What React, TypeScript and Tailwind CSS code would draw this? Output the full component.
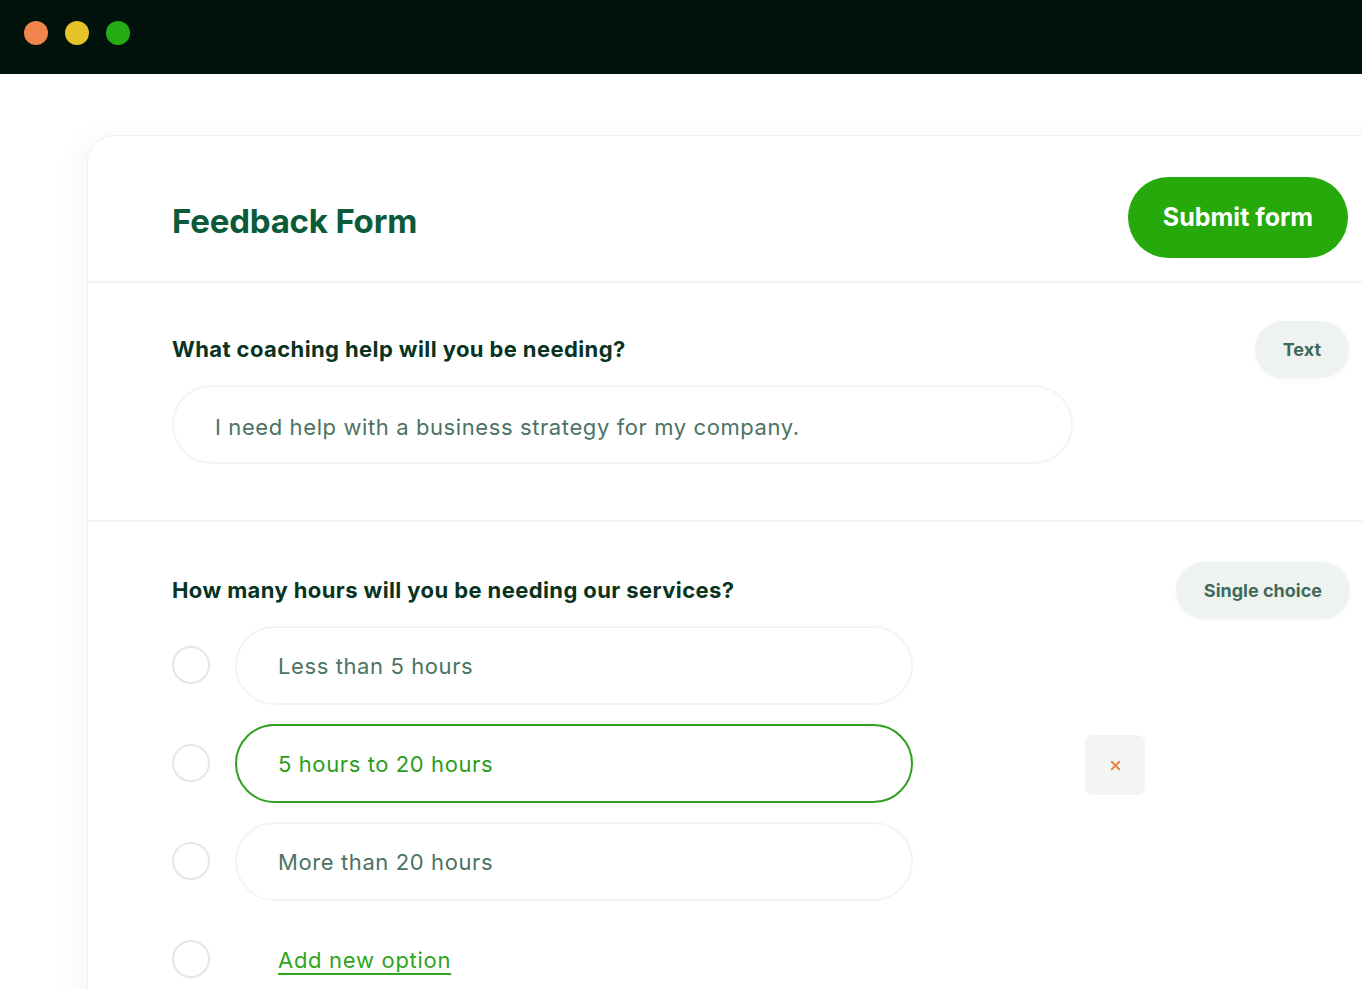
import { X } from "lucide-react";

const options = [
  { id: 1, label: "Less than 5 hours", selected: false },
  { id: 2, label: "5 hours to 20 hours", selected: true },
  { id: 3, label: "More than 20 hours", selected: false },
];

function Radio() {
  return <div className="w-[38px] h-[38px] shrink-0 rounded-full border-2 border-[#e4e7e5]" />;
}

function TypePill({ label }: { label: string }) {
  return (
    <div className="h-[57px] px-7 rounded-full bg-[#eff3f0] flex items-center text-[18px] font-bold text-[#3f6a5a] shadow-[0_2px_6px_rgba(0,0,0,0.03)]">
      {label}
    </div>
  );
}

export default function App() {
  return (
    <div className="w-[1362px] h-[989px] overflow-hidden bg-white font-['Inter',sans-serif]">
      {/* window bar */}
      <div className="h-[74px] bg-[#01120d] flex items-center gap-[17px] pl-6 pb-[8px]">
        <div className="w-6 h-6 rounded-full bg-[#ef844d]" />
        <div className="w-6 h-6 rounded-full bg-[#e6c328]" />
        <div className="w-6 h-6 rounded-full bg-[#23ad12]" />
      </div>

      <div className="pt-[61px] pl-[87px]">
        <div className="w-[1320px] h-[900px] rounded-tl-[28px] border border-[#eef0ef] bg-white shadow-[-12px_0_24px_rgba(0,0,0,0.03)]">
          {/* header */}
          <div className="h-[147px] flex items-center justify-between pl-[84px] pr-[58px] border-b-2 border-[#f2f3f2]">
            <h1 className="text-[33px] font-bold text-[#0b5a3a] tracking-[-0.2px] mt-[26px]">Feedback Form</h1>
            <button className="h-[81px] w-[220px] rounded-full bg-[#25a90b] text-white text-[25px] font-bold mt-[18px]">
              Submit form
            </button>
          </div>

          {/* question 1 */}
          <div className="pl-[84px] pr-[57px] pt-[38px] pb-[56px] border-b-2 border-[#f2f3f2]">
            <div className="flex items-center justify-between h-[57px]">
              <h2 className="text-[22px] font-bold text-[#08331f] tracking-[0.4px]">
                What coaching help will you be needing?
              </h2>
              <TypePill label="Text" />
            </div>
            <div className="mt-[7px] w-[901px] h-[79px] rounded-full border-2 border-[#f3f4f3] flex items-center pl-[41px] pt-[5px] text-[22px] tracking-[0.6px] text-[#4b7363]">
              I need help with a business strategy for my company.
            </div>
          </div>

          {/* question 2 */}
          <div className="pl-[84px] pr-[56px] pt-[40px]">
            <div className="flex items-center justify-between h-[57px]">
              <h2 className="text-[22px] font-bold text-[#08331f] tracking-[0.4px]">
                How many hours will you be needing our services?
              </h2>
              <TypePill label="Single choice" />
            </div>
            <div className="mt-[7px] flex flex-col gap-[20px]">
              {options.map((o) => (
                <div key={o.id} className="flex items-center h-[78px]">
                  <Radio />
                  <div
                    className={
                      o.selected
                        ? "ml-[25px] w-[678px] h-[79px] rounded-full border-2 border-[#2fa01f] flex items-center pl-[41px] pt-[3px] text-[22px] tracking-[0.6px] text-[#2c9d1a]"
                        : "ml-[25px] w-[678px] h-[79px] rounded-full border-2 border-[#f3f4f3] flex items-center pl-[41px] pt-[3px] text-[22px] tracking-[0.6px] text-[#4b7363]"
                    }
                  >
                    {o.label}
                  </div>
                  {o.selected && (
                    <div className="ml-[172px] mt-[4px] w-[60px] h-[60px] rounded-[8px] bg-[#f2f5f2] flex items-center justify-center">
                      <X className="w-[15px] h-[15px] text-[#e8843f]" strokeWidth={3} />
                    </div>
                  )}
                </div>
              ))}
              <div className="flex items-center h-[78px]">
                <Radio />
                <a className="ml-[68px] pt-[3px] text-[22px] tracking-[0.7px] text-[#2ea51b] underline underline-offset-[5px] decoration-[1.5px]">
                  Add new option
                </a>
              </div>
            </div>
          </div>
        </div>
      </div>
    </div>
  );
}
